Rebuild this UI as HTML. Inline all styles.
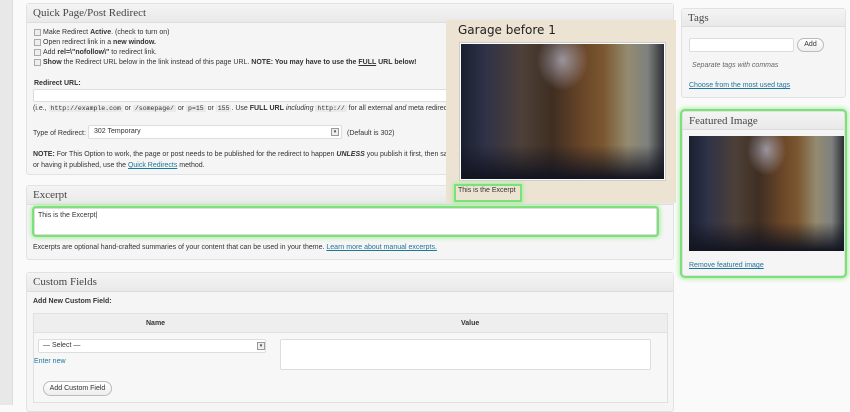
<!DOCTYPE html>
<html><head><style>
*{box-sizing:border-box;margin:0;padding:0}
body{width:850px;height:405px;overflow:hidden;background:#fafafa;font-family:"Liberation Sans",sans-serif;font-size:8px;color:#333;position:relative}
.abs{position:absolute}
.side{left:0;top:0;width:13px;height:405px;background:#e8e8e8;border-right:1px solid #ddd}
.box{position:absolute;background:#f5f5f5;border:1px solid #e2e2e2;border-radius:3px}
.hd{height:19px;background:linear-gradient(#f4f4f4,#e9e9e9);border-bottom:1px solid #ddd;font-family:"Liberation Serif",serif;font-size:11px;color:#464646;padding:3px 6px}
.cb{display:inline-block;width:7px;height:7px;border:1px solid #aaa;background:#eee;vertical-align:middle;margin-right:2px}
a{color:#21759b;text-decoration:underline}
.code{background:#eaeaea;font-family:"Liberation Mono",monospace;font-size:6.5px;padding:0 2px}
.inp{position:absolute;background:#fff;border:1px solid #ddd;border-radius:2px}
.glow{box-shadow:0 0 0 2px #7ee07a,0 0 4px 3px #a8efa0}
.photo{position:absolute;background:
radial-gradient(ellipse at 50% 12%,rgba(220,225,255,.55) 0,transparent 18%),
linear-gradient(90deg,#1a2030 0%,#303248 12%,#4d4038 30%,#3f2e22 45%,#6a4628 60%,#7a5730 70%,#948a70 82%,#7e817e 92%,#2e2e36 100%);}
.photo:after{content:"";position:absolute;left:0;right:0;bottom:0;height:25%;background:linear-gradient(transparent,#121420)}
.btn{position:absolute;border:1px solid #bbb;border-radius:9px;background:linear-gradient(#fff,#eee);font-size:7px;color:#333;text-align:center}
</style></head><body>
<div class="abs side"></div>

<div class="box" style="left:26px;top:3px;width:648px;height:172px">
<div class="hd">Quick Page/Post Redirect</div>
<div style="padding:5px 7px;line-height:10px;font-size:7px">
<div><span class="cb"></span>Make Redirect <b>Active</b>. (check to turn on)</div>
<div><span class="cb"></span>Open redirect link in a <b>new window.</b></div>
<div><span class="cb"></span>Add <b>rel=\"nofollow\"</b> to redirect link.</div>
<div><span class="cb"></span><b>Show</b> the Redirect URL below in the link instead of this page URL. <b>NOTE: You may have to use the <u>FULL</u> URL below!</b></div>
<div style="margin-top:11px"><b>Redirect URL:</b></div>
</div>
<div class="inp" style="left:6px;top:85px;width:640px;height:13px"></div>
<div class="abs" style="left:6px;top:101px;font-size:7px">(i.e., <span class="code">http://example.com</span> or <span class="code">/somepage/</span> or <span class="code">p=15</span> or <span class="code">155</span>. Use <b>FULL URL</b> <i>including</i> <span class="code">http://</span> for all external <i>and</i> meta redirects. )</div>
<div class="abs" style="left:6px;top:126px;font-size:7px">Type of Redirect:</div>
<div class="inp" style="left:61px;top:121px;width:254px;height:14px;font-size:7px;padding:2px 5px">302 Temporary<span class="abs" style="right:2px;top:2px;width:8px;height:8px;border:1px solid #999;background:#eee;font-size:5px;line-height:7px;text-align:center">▾</span></div>
<div class="abs" style="left:320px;top:126px;font-size:7px">(Default is 302)</div>
<div class="abs" style="left:6px;top:145px;font-size:7px;line-height:11px;width:640px;white-space:nowrap;overflow:hidden"><b>NOTE:</b> For This Option to work, the page or post needs to be published for the redirect to happen <b><i>UNLESS</i></b> you publish it first, then save<br>or having it published, use the <a>Quick Redirects</a> method.</div>
</div>

<div class="box" style="left:26px;top:185px;width:648px;height:75px">
<div class="hd">Excerpt</div>
<div class="inp glow" style="left:7px;top:22px;width:623px;height:27px;font-size:7px;padding:3px">This is the Excerpt|</div>
<div class="abs" style="left:6px;top:58px;font-size:7px">Excerpts are optional hand-crafted summaries of your content that can be used in your theme. <a>Learn more about manual excerpts.</a></div>
</div>

<div class="box" style="left:26px;top:272px;width:648px;height:140px">
<div class="hd">Custom Fields</div>
<div class="abs" style="left:6px;top:25px;font-size:7px;font-weight:bold">Add New Custom Field:</div>
<div class="abs" style="left:6px;top:40px;width:635px;height:90px;border:1px solid #e0e0e0;background:#f7f7f7">
<div style="height:19px;background:#eee;border-bottom:1px solid #e0e0e0;font-size:7px;font-weight:bold;position:relative"><span class="abs" style="left:112px;top:6px">Name</span><span class="abs" style="left:427px;top:6px">Value</span></div>
<div class="inp" style="left:4px;top:25px;width:228px;height:14px;font-size:7px;padding:2px 4px">— Select —<span class="abs" style="right:0;top:2px;width:8px;height:8px;border:1px solid #999;background:#eee;font-size:5px;line-height:7px;text-align:center">▾</span></div>
<div class="abs" style="left:0;top:44px;font-size:7px;color:#21759b">Enter new</div>
<div class="inp" style="left:246px;top:25px;width:371px;height:31px"></div>
<div class="btn" style="left:9px;top:67px;width:69px;height:15px;line-height:13px">Add Custom Field</div>
</div>
</div>

<div class="abs" style="left:446px;top:20px;width:230px;height:183px;background:#ece3d3">
<div class="abs" style="left:12px;top:3px;font-size:12px;color:#222;font-family:'DejaVu Sans',sans-serif">Garage before 1</div>
<div class="abs" style="left:13px;top:22px;width:207px;height:139px;background:#fff;border:1px solid #ccc"></div>
<div class="photo" style="left:15px;top:24px;width:203px;height:135px"></div>
<div class="abs glow" style="left:10px;top:166px;width:64px;height:14px;font-size:7px;padding:1px 2px;background:#ece3d3">This is the Excerpt</div>
</div>

<div class="box" style="left:681px;top:8px;width:165px;height:90px">
<div class="hd" style="height:18px">Tags</div>
<div class="inp" style="left:7px;top:29px;width:105px;height:14px"></div>
<div class="btn" style="left:115px;top:29px;width:27px;height:14px;line-height:12px">Add</div>
<div class="abs" style="left:10px;top:53px;font-size:7px;color:#666;font-style:italic">Separate tags with commas</div>
<div class="abs" style="left:7px;top:73px;font-size:7px"><a>Choose from the most used tags</a></div>
</div>

<div class="box glow" style="left:682px;top:111px;width:163px;height:165px">
<div class="hd" style="height:18px">Featured Image</div>
<div class="photo" style="left:6px;top:24px;width:155px;height:115px"></div>
<div class="abs" style="left:6px;top:150px;font-size:7px"><a>Remove featured image</a></div>
</div>
</body></html>
